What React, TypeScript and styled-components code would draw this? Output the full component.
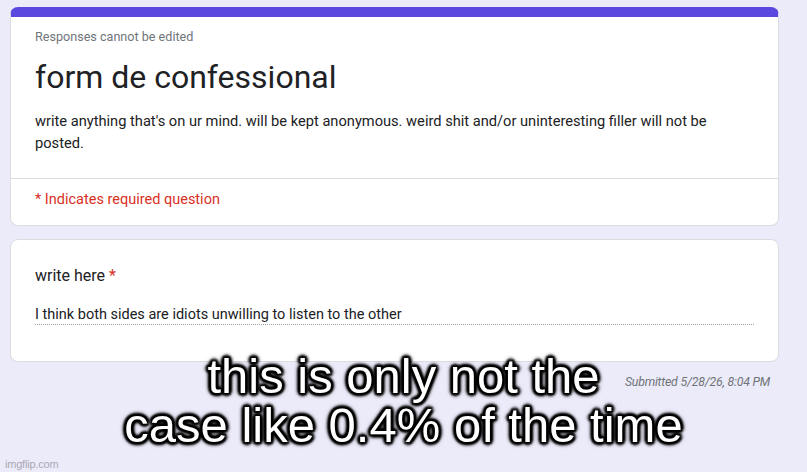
import styled, { createGlobalStyle } from "styled-components";

const Global = createGlobalStyle`
  html, body {
    margin: 0;
    padding: 0;
    background: #ecebf9;
  }
  body {
    width: 807px;
    height: 472px;
    overflow: hidden;
    font-family: Roboto, "Liberation Sans", Arial, sans-serif;
  }
`;

const Page = styled.div`
  position: relative;
  width: 807px;
  height: 472px;
  padding: 7px 28px 0 10px;
  box-sizing: border-box;
  display: flex;
  flex-direction: column;
  gap: 13px;
`;

const Card = styled.div<{ $accent?: boolean }>`
  background: #ffffff;
  border: 1px solid #dadce0;
  border-radius: 8px;
  overflow: hidden;
  ${(p) => (p.$accent ? "border-top: 10px solid #5b48de;" : "")}
`;

const Section = styled.div<{ $divider?: boolean }>`
  padding: ${(p) => (p.$divider ? "11px 24px 15px" : "12px 24px 24px")};
  ${(p) => (p.$divider ? "border-top: 1px solid #dadce0;" : "")}
`;

const Note = styled.div`
  font-size: 12.6px;
  line-height: 16px;
  color: #70757a;
`;

const Title = styled.h1`
  margin: 12px 0 0;
  font-size: 32px;
  line-height: 40px;
  font-weight: 400;
  color: #202124;
`;

const Desc = styled.p`
  margin: 13px 0 0;
  font-size: 14.65px;
  line-height: 22px;
  color: #202124;
`;

const Required = styled.div`
  font-size: 14.5px;
  line-height: 20px;
  color: #d93025;
`;

const Question = styled.div`
  padding: 24px 24px 36px;
`;

const Label = styled.div`
  font-size: 16px;
  line-height: 24px;
  color: #202124;
  span {
    color: #d93025;
  }
`;

const Answer = styled.div`
  margin-top: 17px;
  font-size: 14.5px;
  line-height: 19px;
  color: #202124;
  border-bottom: 1px dotted #9aa0a6;
`;

const Submitted = styled.div`
  margin-top: -1px;
  padding-right: 9px;
  text-align: right;
  font-size: 12.3px;
  line-height: 16px;
  font-style: italic;
  color: #70757a;
  letter-spacing: -0.2px;
`;

const Watermark = styled.div`
  position: absolute;
  left: 5px;
  bottom: 2px;
  font-family: "Liberation Sans", Arial, sans-serif;
  font-size: 11px;
  letter-spacing: -0.2px;
  color: #a9a8b6;
`;

const Caption = styled.div`
  position: absolute;
  left: 0;
  right: 0;
  top: 352px;
  text-align: center;
  font-family: "Liberation Sans", Arial, sans-serif;
  font-size: 49px;
  line-height: 49px;
  color: #ffffff;
  text-shadow:
    2px 2px 2px #000, -2px -2px 2px #000, 2px -2px 2px #000, -2px 2px 2px #000,
    0 3px 3px #000, 0 -3px 3px #000, 3px 0 3px #000, -3px 0 3px #000,
    0 0 6px #000;
`;

export default function App() {
  return (
    <>
      <Global />
      <Page>
        <Card $accent>
          <Section>
            <Note>Responses cannot be edited</Note>
            <Title>form de confessional</Title>
            <Desc>
              write anything that's on ur mind. will be kept anonymous. weird shit and/or uninteresting filler will not be
              posted.
            </Desc>
          </Section>
          <Section $divider>
            <Required>* Indicates required question</Required>
          </Section>
        </Card>
        <Card>
          <Question>
            <Label>
              write here <span>*</span>
            </Label>
            <Answer>I think both sides are idiots unwilling to listen to the other</Answer>
          </Question>
        </Card>
        <Submitted>Submitted 5/28/26, 8:04 PM</Submitted>
        <Caption>
          this is only not the
          <br />
          case like 0.4% of the time
        </Caption>
        <Watermark>imgflip.com</Watermark>
      </Page>
    </>
  );
}
